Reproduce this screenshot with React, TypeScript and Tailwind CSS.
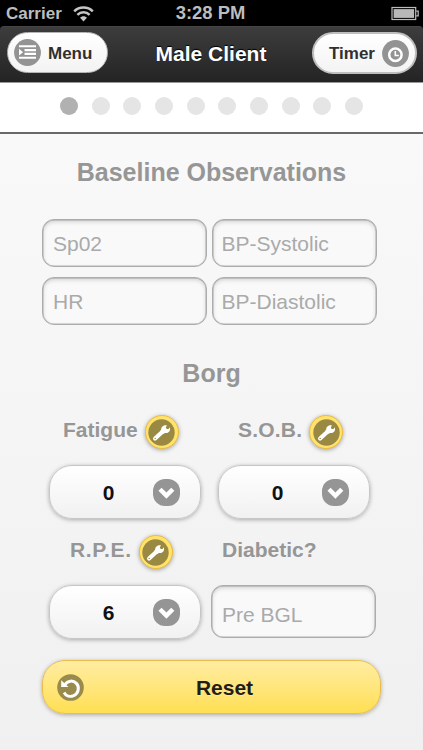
import React from 'react';

function WrenchButton({ label }: { label: string }) {
  return (
    <button
      aria-label={label}
      className="flex size-[34px] shrink-0 items-center justify-center rounded-full border border-[#eebd3d] bg-[#ffe36c] shadow-[0_1px_4px_rgba(0,0,0,0.35)]"
    >
      <svg className="size-[27px]" viewBox="0 0 27 27">
        <circle cx="13.5" cy="13.5" r="13.2" fill="#998943" />
        <path d="M7.1 19.5 L15.5 11.8" stroke="#fff" strokeWidth="4.2" strokeLinecap="round" />
        <path
          d="M13.2 10.5 C13.1 7.8 15.8 5.8 18.9 6.4 L17.8 8.5 L18.7 10.1 L20.6 10 L21.7 8.3 C23 11.8 20.7 14.4 17 14.1 L14.7 15.2 L11.9 12.4 Z"
          fill="#fff"
        />
        <circle cx="7.2" cy="19.4" r="0.7" fill="#998943" />
      </svg>
    </button>
  );
}

function Field({ placeholder, className }: { placeholder: string; className: string }) {
  return (
    <input
      placeholder={placeholder}
      className={`block w-[165px] rounded-[12px] border-[1.5px] border-[#acacac] bg-[#f9f9f9] text-[21px] text-[#333] shadow-[inset_0_2px_4px_rgba(0,0,0,0.16),inset_0_0_0_0.5px_#bbb] outline-none placeholder:text-[#aaa] ${className}`}
    />
  );
}

function Select({ value }: { value: string }) {
  return (
    <button className="flex h-[54px] w-[152px] items-center rounded-[23px] border border-[#c6c6c6] bg-linear-to-b from-white to-[#f1f1f1] shadow-[0_1px_4px_rgba(0,0,0,0.3)]">
      <span className="w-[117px] pt-px text-center text-[21px] leading-6 font-bold text-[#111]">{value}</span>
      <svg className="-ml-[14px] size-[27px]" viewBox="0 0 27 27">
        <rect width="27" height="27" rx="12" fill="#959595" />
        <path d="m7 10.3 6.4 6.3 6.4-6.3" fill="none" stroke="#fff" strokeWidth="4.4" />
      </svg>
    </button>
  );
}

export default function App() {
  return (
    <div className="flex h-[750px] w-[423px] flex-col overflow-hidden bg-[#f5f5f5] font-['Liberation_Sans',Arial,sans-serif]">
      <div className="grid h-[26px] shrink-0 grid-cols-3 items-center bg-black px-[6px] text-[17.5px] leading-[26px] font-bold text-[#bdbdbd]">
        <div className="flex items-center gap-[11px]">
          <span className="pt-px text-[17px]">Carrier</span>
          <svg className="h-[16px] w-[21px]" viewBox="0 0 21 16">
            <path d="M1.2 5.3 C6.2 .2 14.8 .2 19.8 5.3 M4.4 8.8 C7.8 5.3 13.2 5.3 16.6 8.8" fill="none" stroke="#c5c5c5" strokeWidth="2.5" />
            <path d="M7.1 11.7 C9 9.7 12 9.7 13.9 11.7 L10.5 15.4Z" fill="#c5c5c5" />
          </svg>
        </div>
        <span className="pr-[2px] pb-px text-center text-[18.4px] whitespace-nowrap">3:28 PM</span>
        <svg className="mr-[-3px] h-[15px] w-[29px] justify-self-end" viewBox="0 0 29 15">
          <rect x="1" y="1.5" width="23.7" height="12" fill="none" stroke="#bcbcbc" strokeWidth="1.2" />
          <rect x="2.6" y="3.1" width="20.5" height="8.8" fill="#b8b8b8" />
          <path d="M25.2 5.2h2v4.6h-2" fill="none" stroke="#bcbcbc" strokeWidth="1.2" />
        </svg>
      </div>

      <div className="shrink-0 bg-black">
        <header className="flex h-[57px] items-start justify-between rounded-t-[4px] border-t border-b border-t-[#454545] border-b-[#999] bg-linear-to-b from-[#3d3d3d] to-[#242424] pt-[5px] pr-[6px] pl-[7px]">
          <button className="flex h-[41px] w-[101px] items-center gap-[7px] rounded-full border border-[#b5b5b5] bg-linear-to-b from-white to-[#f3f3f3] pl-[6px] text-[17px] font-bold text-[#303030]">
            <svg className="size-[27px] shrink-0" viewBox="0 0 27 27">
              <circle cx="13.5" cy="13.5" r="13.4" fill="#939393" />
              <path d="M5 7.2h17M10.5 11.1H22M10.5 14.9H22M5 18.8h17" stroke="#fff" strokeWidth="2.1" />
              <path d="M5 9.8v6.7l4.1-3.3z" fill="#fff" />
            </svg>
            <span className="pt-[3px]">Menu</span>
          </button>
          <h1 className="pt-[10px] pl-[2px] text-[21px] leading-6 font-bold whitespace-nowrap text-white [text-shadow:0_-1px_1px_#000]">Male Client</h1>
          <button className="flex h-[42px] w-[105px] items-center justify-end gap-[7px] rounded-full border-2 border-[#bebebe] bg-linear-to-b from-white to-[#f3f3f3] pr-[6px] text-[17px] font-bold text-[#303030]">
            <span className="pt-[2px]">Timer</span>
            <svg className="size-[27px] shrink-0" viewBox="0 0 27 27">
              <circle cx="13.5" cy="13.5" r="13.4" fill="#939393" />
              <circle cx="13.4" cy="14.8" r="6.2" fill="none" stroke="#fff" strokeWidth="2.5" />
              <path d="M13.3 11v4.5h3.6" fill="none" stroke="#fff" strokeWidth="1.6" />
            </svg>
          </button>
        </header>
      </div>

      <div className="flex h-[51px] shrink-0 items-center justify-center gap-[13.7px] border-b-2 border-[#696969] bg-white pb-[3px]">
        {Array.from({ length: 10 }, (_, i) => (
          <span key={i} className={i === 0 ? 'size-[18px] rounded-full bg-[#b1b1b1]' : 'size-[18px] rounded-full bg-[#e5e5e5]'} />
        ))}
      </div>

      <main className="flex-1 bg-linear-to-b from-[#f9f9f9] to-[#f0f0f0] pl-[42px] text-[#969696]">
        <h2 className="w-[339px] pt-[23px] text-center text-[25px] leading-[30px] font-bold">Baseline Observations</h2>
        <div className="mt-[32px] grid w-[335px] grid-cols-2 gap-x-[4px] gap-y-[10px]">
          <Field placeholder="Sp02" className="h-[48px] px-[10px] pt-[2px]" />
          <Field placeholder="BP-Systolic" className="h-[48px] px-[9px] pt-[2px]" />
          <Field placeholder="HR" className="h-[48px] px-[10px] pt-[2px]" />
          <Field placeholder="BP-Diastolic" className="h-[48px] px-[9px] pt-[2px]" />
        </div>

        <h2 className="mt-[33px] w-[339px] text-center text-[25px] leading-[30px] font-bold">Borg</h2>
        <div className="mt-[27px] grid w-[338px] grid-cols-2 text-[21px] leading-6 font-bold">
          <div className="flex items-center gap-[7px] pl-[21px]">
            <span className="-mt-[5px]">Fatigue</span>
            <WrenchButton label="Fatigue scale" />
          </div>
          <div className="flex items-center gap-[7px] pl-[27px]">
            <span className="-mt-[5px] tracking-[0.2px]">S.O.B.</span>
            <WrenchButton label="S.O.B. scale" />
          </div>
        </div>
        <div className="mt-[16px] flex gap-[17px] pl-[7px]">
          <Select value="0" />
          <Select value="0" />
        </div>

        <div className="mt-[16px] grid w-[338px] grid-cols-2 text-[21px] leading-6 font-bold">
          <div className="flex items-center gap-[7px] pl-[28px]">
            <span className="-mt-[5px] tracking-[0.6px]">R.P.E.</span>
            <WrenchButton label="R.P.E. scale" />
          </div>
          <span className="-mt-[5px] self-center pl-[11px]">Diabetic?</span>
        </div>
        <div className="mt-[16px] flex gap-[10px] pl-[7px]">
          <Select value="6" />
          <Field placeholder="Pre BGL" className="h-[53px] px-[10px] pt-[6px]" />
        </div>

        <button className="mt-[21px] flex h-[54px] w-[339px] items-center rounded-[23px] border border-[#e9bd49] bg-linear-to-b from-[#ffeda0] to-[#ffdf50] pl-[14px] text-[21px] font-bold text-[#201e17] shadow-[0_1px_4px_rgba(0,0,0,0.3)]">
          <svg className="size-[27px]" viewBox="0 0 27 27">
            <circle cx="13.5" cy="13.5" r="13.3" fill="#998b4b" />
            <path d="M8.1 10.6 C10.5 6.4 16.2 6 19.4 9.4 C23 13.2 21.4 20 16.2 21.9 C12.5 23.2 8.7 21.6 7.1 18.5" fill="none" stroke="#fff" strokeWidth="3" />
            <path d="M4.2 6.2v6.7h7.3z" fill="#fff" />
          </svg>
          <span className="flex-1 pt-[2px] pr-[15px] text-center [text-shadow:0_1px_0_#fff3]">Reset</span>
        </button>
      </main>
    </div>
  );
}
